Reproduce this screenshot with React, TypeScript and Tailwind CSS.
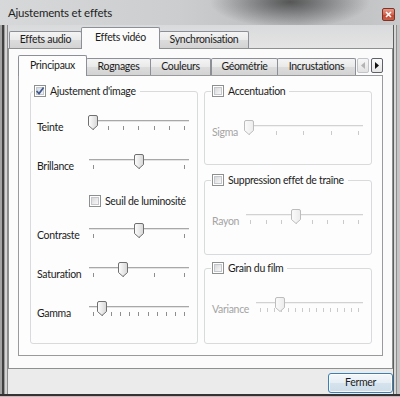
import React from "react";

function Thumb({ disabled }: { disabled?: boolean }) {
  const id = disabled ? "thumbD" : "thumbE";
  return (
    <svg width="10" height="15" viewBox="0 0 10 15">
      <defs>
        <linearGradient id={id} x1="0" y1="0" x2="1" y2="0">
          <stop offset="0" stopColor={disabled ? "#fbfbfb" : "#ffffff"} />
          <stop offset="1" stopColor={disabled ? "#ececec" : "#d6d6d6"} />
        </linearGradient>
      </defs>
      <path
        d="M2 0.5 H8 Q9.5 0.5 9.5 2 V10.5 L5 14.5 L0.5 10.5 V2 Q0.5 0.5 2 0.5 Z"
        fill={`url(#${id})`}
        stroke={disabled ? "#bdbdbd" : "#707070"}
      />
    </svg>
  );
}

function Slider({
  ticks,
  value,
  disabled,
  className,
}: {
  ticks: number;
  value: number;
  disabled?: boolean;
  className: string;
}) {
  return (
    <div className={`relative flex flex-col h-[22px] ${className}`}>
      <div
        className={`mt-[5px] h-[2px] border-t ${
          disabled ? "border-[#d2d2d2] bg-[#f2f2f2]" : "border-[#a8a8a8] bg-[#e4e4e4]"
        }`}
      />
      <div className="mt-[4px] mx-[4px] flex justify-between">
        {Array.from({ length: ticks }).map((_, i) => (
          <div
            key={i}
            className={`w-[1px] h-[4px] ${disabled ? "bg-[#cacaca]" : "bg-[#8e8e8e]"}`}
          />
        ))}
      </div>
      <div className="absolute top-0" style={{ left: `calc(${value} * (100% - 9px) - 1px)` }}>
        <Thumb disabled={disabled} />
      </div>
    </div>
  );
}

function CheckBox({ checked }: { checked?: boolean }) {
  const id = checked ? "cbC" : "cbU";
  return (
    <svg width="12" height="12" viewBox="0 0 12 12" className="shrink-0">
      <defs>
        <linearGradient id={id} x1="0" y1="0" x2="1" y2="1">
          <stop offset="0" stopColor={checked ? "#cfd8e6" : "#d6d6d6"} />
          <stop offset="1" stopColor={checked ? "#f4f7fb" : "#fbfbfb"} />
        </linearGradient>
      </defs>
      <rect x="0.5" y="0.5" width="11" height="11" fill="#ffffff" stroke="#8e8f8f" />
      <rect x="2.5" y="2.5" width="7" height="7" fill={`url(#${id})`} stroke="#c4c7cb" />
      {checked && (
        <path d="M2.6 6 L5 8.6 L9.6 2.6" stroke="#43588c" strokeWidth="1.7" fill="none" />
      )}
    </svg>
  );
}

function LeftRow({
  label,
  ticks,
  value,
  className,
}: {
  label: string;
  ticks: number;
  value: number;
  className: string;
}) {
  return (
    <div className={`flex items-start ml-[4px] ${className}`}>
      <span className="w-[52px] mt-[5px] leading-[14px]">{label}</span>
      <Slider className="w-[100px]" ticks={ticks} value={value} />
    </div>
  );
}

function RightRow({ label, ticks, value }: { label: string; ticks: number; value: number }) {
  return (
    <div className="flex items-start ml-[1px] pr-[8px] mt-[22px]">
      <span className="mt-[5px] leading-[14px] text-[#a4a4a4]">{label}</span>
      <Slider className="flex-1 ml-[7px]" ticks={ticks} value={value} disabled />
    </div>
  );
}

function Legend({ label, checked }: { label: string; checked?: boolean }) {
  return (
    <legend className="flex items-center h-[14px] gap-[4px] pl-[1px] pr-[4px]">
      <CheckBox checked={checked} />
      <span className="leading-[14px]">{label}</span>
    </legend>
  );
}

const tabBg =
  "bg-[linear-gradient(180deg,#f4f4f4_0%,#e9e9e9_50%,#dcdcdc_51%,#d3d3d3_100%)]";

export default function App() {
  return (
    <div className="w-[400px] h-[397px] flex flex-col bg-[#c6c8ca] font-['Lato',sans-serif] text-[10.5px] tracking-[-0.3px] text-[#1c1c1c] overflow-hidden">
      {/* Title bar */}
      <div className="h-[25px] flex items-start pl-[8px] pr-[5px] bg-[radial-gradient(ellipse_80px_26px_at_290px_2px,rgba(60,60,60,0.8),rgba(60,60,60,0)),linear-gradient(90deg,#d6d8da_0%,#cbcdcf_45%,#b9bbbd_75%,#c7c9cb_100%)]">
        <span className="mt-[5px] text-[11.5px] tracking-[-0.2px] leading-[16px] text-[#1e1e1e]">Ajustements et effets</span>
        <div className="ml-auto mt-[8px] w-[13px] h-[13px] rounded-[2px] border border-[#7d3326] bg-[linear-gradient(180deg,#e6988a_0%,#d26650_50%,#c0442e_51%,#c9604a_100%)] flex items-center justify-center">
          <svg width="7" height="7" viewBox="0 0 7 7">
            <path d="M1 1 L6 6 M6 1 L1 6" stroke="#ffffff" strokeWidth="1.6" />
          </svg>
        </div>
      </div>

      {/* Middle */}
      <div className="flex flex-1">
        {/* left frame */}
        <div className="flex w-[8px]">
          <div className="w-[2px] bg-[#a3a3a3]" />
          <div className="w-[2px] bg-[#404040]" />
          <div className="w-[1px] bg-[#9a9a9a]" />
          <div className="w-[2px] bg-[#d4d4d4]" />
          <div className="w-[1px] bg-[#8c8c8c]" />
        </div>

        {/* client */}
        <div className="w-[385px] flex flex-col bg-[#ebebeb]">
          {/* outer tabs */}
          <div className="h-[23px] flex items-end pl-[1px] bg-[linear-gradient(180deg,#d9dadb,#e4e4e4)]">
            <div className={`w-[73px] h-[17px] border border-b-0 border-[#8c8f96] rounded-t-[2px] ${tabBg} flex items-center justify-center`}>
              Effets audio
            </div>
            <div className="relative z-10 -ml-[1px] -mb-[1px] w-[79px] h-[22px] border border-b-0 border-[#8c8f96] rounded-t-[2px] bg-[#fbfbfb] flex items-center justify-center pb-[1px]">
              Effets vidéo
            </div>
            <div className={`-ml-[1px] w-[90px] h-[17px] border border-b-0 border-[#8c8f96] rounded-t-[2px] ${tabBg} flex items-center justify-center`}>
              Synchronisation
            </div>
          </div>

          {/* outer pane */}
          <div className="h-[321px] border border-[#8e8f8f] bg-[#fbfbfb] pl-[9px] pr-[9px] pt-[6px] flex flex-col">
            {/* inner tabs */}
            <div className="h-[20px] flex items-end">
              <div className="relative z-10 -mb-[1px] w-[69px] h-[21px] border border-b-0 border-[#8c8f96] rounded-t-[2px] bg-[#fdfdfd] flex items-center justify-center pb-[1px]">
                Principaux
              </div>
              <div className={`-ml-[1px] w-[65px] h-[17px] border border-b-0 border-[#8c8f96] rounded-t-[2px] ${tabBg} flex items-center justify-center`}>
                Rognages
              </div>
              <div className={`-ml-[1px] w-[61px] h-[17px] border border-b-0 border-[#8c8f96] rounded-t-[2px] ${tabBg} flex items-center justify-center`}>
                Couleurs
              </div>
              <div className={`w-[67px] h-[17px] border border-b-0 border-[#8c8f96] rounded-t-[2px] ${tabBg} flex items-center justify-center`}>
                Géométrie
              </div>
              <div className={`-ml-[1px] w-[79px] h-[17px] border border-b-0 border-[#8c8f96] rounded-t-[2px] ${tabBg} flex items-center justify-center`}>
                Incrustations
              </div>
              <div className="self-start mt-[3px] ml-[1px] w-[12px] h-[15px] border border-[#c2c4c8] rounded-[2px] bg-[linear-gradient(180deg,#f7f7f7,#e2e2e2)] flex items-center justify-center">
                <svg width="4" height="7" viewBox="0 0 4 7">
                  <path d="M4 0 L0 3.5 L4 7 Z" fill="#b4b4b4" />
                </svg>
              </div>
              <div className="self-start mt-[3px] ml-[2px] w-[12px] h-[15px] border border-[#5f6166] rounded-[2px] bg-[linear-gradient(180deg,#fbfbfb,#e6e6e6)] flex items-center justify-center">
                <svg width="4" height="7" viewBox="0 0 4 7">
                  <path d="M0 0 L4 3.5 L0 7 Z" fill="#111111" />
                </svg>
              </div>
            </div>

            {/* inner pane */}
            <div className="h-[281px] border border-[#989a9c] bg-[#fdfdfd] pl-[11px] pt-[8px] flex gap-[6px] items-start">
              {/* left group */}
              <fieldset className="w-[168px] border border-[#d8dadc] rounded-[3px] pl-[2px] pb-[20px] flex flex-col">
                <Legend label="Ajustement d'image" checked />
                <LeftRow label="Teinte" ticks={7} value={0} className="mt-[17px]" />
                <LeftRow label="Brillance" ticks={3} value={0.5} className="mt-[17px]" />
                <div className="mt-[19px] ml-[56px] h-[12px] flex items-center gap-[4px]">
                  <CheckBox />
                  <span className="leading-[12px]">Seuil de luminosité</span>
                </div>
                <LeftRow label="Contraste" ticks={3} value={0.5} className="mt-[16px]" />
                <LeftRow label="Saturation" ticks={4} value={1 / 3} className="mt-[17px]" />
                <LeftRow label="Gamma" ticks={11} value={0.1} className="mt-[17px]" />
              </fieldset>

              {/* right column */}
              <div className="w-[168px] flex flex-col">
                <fieldset className="border border-[#d8dadc] rounded-[3px] pl-[6px] pb-[22px] flex flex-col">
                  <Legend label="Accentuation" />
                  <RightRow label="Sigma" ticks={5} value={0} />
                </fieldset>
                <fieldset className="mt-[8px] border border-[#d8dadc] rounded-[3px] pl-[6px] pb-[23px] flex flex-col">
                  <Legend label="Suppression effet de traîne" />
                  <RightRow label="Rayon" ticks={8} value={3 / 7} />
                </fieldset>
                <fieldset className="mt-[6px] border border-[#d8dadc] rounded-[3px] pl-[6px] pb-[24px] flex flex-col">
                  <Legend label="Grain du film" />
                  <RightRow label="Variance" ticks={15} value={0.2} />
                </fieldset>
              </div>
            </div>
          </div>

          {/* bottom buttons */}
          <div className="flex-1 flex justify-end items-start pt-[4px]">
            <div className="w-[65px] h-[20px] rounded-[3px] border border-[#3c7fb1] bg-[linear-gradient(180deg,#f4f8fb_0%,#e6eef4_50%,#d5e3ee_51%,#cddde9_100%)] shadow-[inset_0_0_0_1px_rgba(255,255,255,0.75)] flex items-center justify-center">
              Fermer
            </div>
          </div>
        </div>

        {/* right frame */}
        <div className="flex w-[7px]">
          <div className="w-[1px] bg-[#5e5e5e]" />
          <div className="w-[2px] bg-[#d6d6d6]" />
          <div className="w-[1px] bg-[#8c8c8c]" />
          <div className="w-[3px] bg-[#c4c4c4]" />
        </div>
      </div>

      {/* bottom frame */}
      <div className="h-[3px] flex flex-col">
        <div className="h-[2px] bg-[#333333]" />
        <div className="h-[1px] bg-[#bdbdbd]" />
      </div>
    </div>
  );
}
